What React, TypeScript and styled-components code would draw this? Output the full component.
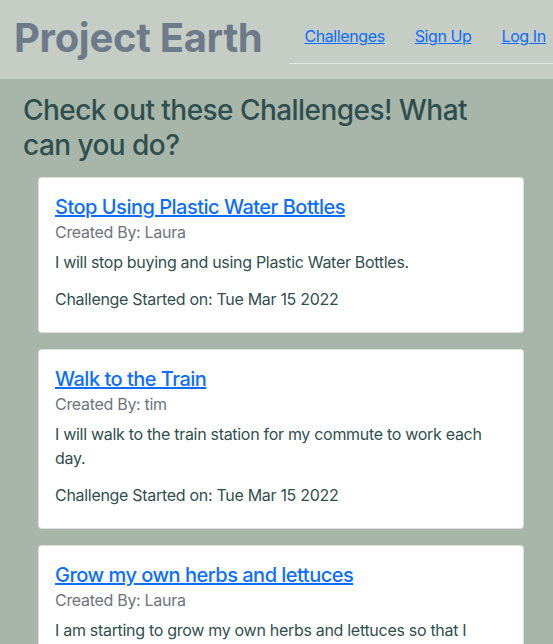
import React from "react";
import styled, { createGlobalStyle } from "styled-components";

const GlobalStyle = createGlobalStyle`
  html, body {
    margin: 0;
    padding: 0;
    background: #a8b5a9;
  }
  body {
    font-family: Inter, "Liberation Sans", sans-serif;
    color: #2f4f4f;
    overflow-x: hidden;
  }
  * { box-sizing: border-box; }
`;

const Header = styled.header`
  display: flex;
  align-items: flex-start;
  height: 79px;
  padding-left: 14px;
  background: #c6cdc5;
  overflow: hidden;
`;

const Brand = styled.h1`
  margin: 14px 0 0 0;
  font-size: 40px;
  line-height: 48px;
  font-weight: 700;
  color: #6c7a89;
  white-space: nowrap;
  letter-spacing: -0.3px;
`;

const NavList = styled.ul`
  display: flex;
  flex-shrink: 0;
  list-style: none;
  margin: 16px 0 0 27px;
  padding: 0;
  border-bottom: 1px solid #e2e6e2;
  flex-grow: 1;
`;

const NavLink = styled.a`
  display: block;
  padding: 8px 15px 15px 15px;
  font-size: 16px;
  line-height: 24px;
  letter-spacing: -0.4px;
  color: #0d6efd;
  text-decoration: underline;
  white-space: nowrap;
`;

const Main = styled.main`
  padding: 0 29px 40px 23px;
`;

const Heading = styled.h2`
  margin: 0;
  padding: 14px 30px 0 0;
  font-size: 28px;
  line-height: 35px;
  font-weight: 500;
  letter-spacing: -0.55px;
  color: #2f4f4f;
`;

const CardList = styled.div`
  display: flex;
  flex-direction: column;
  gap: 16px;
  margin-top: 14px;
  padding-left: 15px;
`;

const Card = styled.article`
  background: #ffffff;
  border: 1px solid rgba(0, 0, 0, 0.125);
  border-radius: 4px;
  padding: 17px 16px 21px 16px;
`;

const CardTitle = styled.a`
  display: block;
  font-size: 20px;
  line-height: 24px;
  font-weight: 500;
  letter-spacing: -0.5px;
  color: #0d6efd;
  text-decoration: underline;
`;

const CardSubtitle = styled.div`
  margin-top: 3px;
  font-size: 16px;
  line-height: 20px;
  letter-spacing: -0.3px;
  color: #6c757d;
`;

const CardText = styled.p<{ $gap: number }>`
  margin: ${(p) => p.$gap}px 0 0 0;
  font-size: 16px;
  line-height: 24px;
  letter-spacing: -0.3px;
  color: #2f4f4f;
`;

type Challenge = { title: string; author: string; text: string };

const challenges: Challenge[] = [
  {
    title: "Stop Using Plastic Water Bottles",
    author: "Laura",
    text: "I will stop buying and using Plastic Water Bottles.",
  },
  {
    title: "Walk to the Train",
    author: "tim",
    text: "I will walk to the train station for my commute to work each day.",
  },
  {
    title: "Grow my own herbs and lettuces",
    author: "Laura",
    text: "I am starting to grow my own herbs and lettuces so that I don't have to buy them wrapped in plastic.",
  },
];

export default function App() {
  return (
    <>
      <GlobalStyle />
      <Header>
        <Brand>Project Earth</Brand>
        <NavList>
          <li><NavLink href="#">Challenges</NavLink></li>
          <li><NavLink href="#">Sign Up</NavLink></li>
          <li><NavLink href="#">Log In</NavLink></li>
        </NavList>
      </Header>
      <Main>
        <Heading>Check out these Challenges! What can you do?</Heading>
        <CardList>
          {challenges.map((c) => (
            <Card key={c.title}>
              <CardTitle href="#">{c.title}</CardTitle>
              <CardSubtitle>Created By: {c.author}</CardSubtitle>
              <CardText $gap={8}>{c.text}</CardText>
              <CardText $gap={13}>Challenge Started on: Tue Mar 15 2022</CardText>
            </Card>
          ))}
        </CardList>
      </Main>
    </>
  );
}
